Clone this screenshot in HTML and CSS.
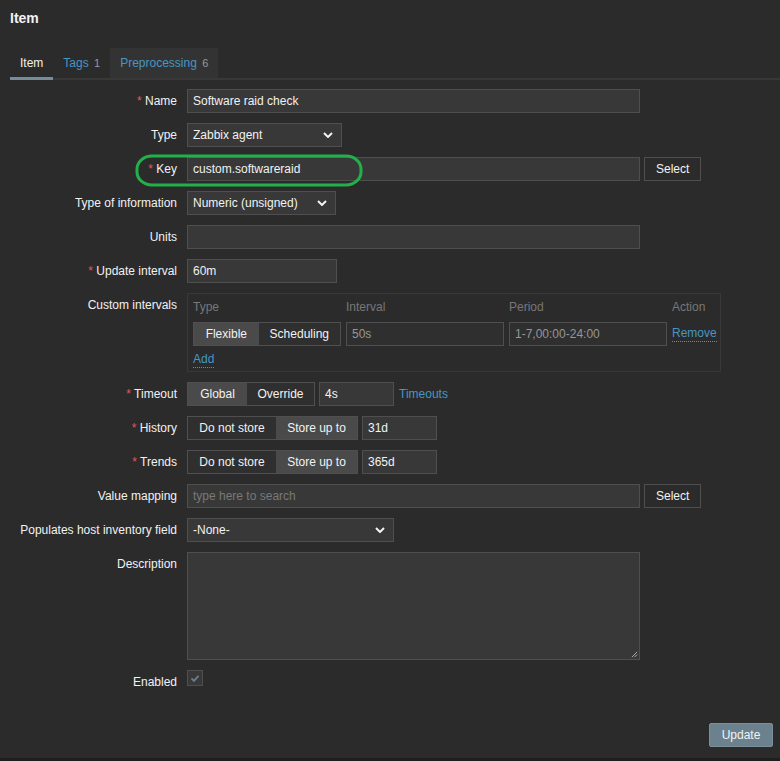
FILE: index.html
```html
<!DOCTYPE html>
<html>
<head>
<meta charset="utf-8">
<link rel="stylesheet" href="styles.css">
</head>
<body>
<div class="page">
  <div class="title">Item</div>
  <div class="tabs">
    <div class="tab active">Item</div>
    <div class="tab link">Tags <span class="cnt">1</span></div>
    <div class="tab link shaded">Preprocessing <span class="cnt">6</span></div>
  </div>

  <div class="form">
    <div class="lbl"><span class="req">*</span> Name</div>
    <div class="ctl"><div class="inp w453">Software raid check</div></div>

    <div class="lbl">Type</div>
    <div class="ctl"><div class="inp sel w155">Zabbix agent<svg class="chev" viewBox="0 0 10 6"><path d="M1 1l4 4 4-4" /></svg></div></div>

    <div class="lbl keylbl"><span class="req">*</span> Key
      <svg class="ring" viewBox="0 0 228 34"><rect x="2" y="2" width="224" height="29" rx="15" ry="13"/></svg>
    </div>
    <div class="ctl"><div class="inp w453">custom.softwareraid</div><div class="btn">Select</div></div>

    <div class="lbl">Type of information</div>
    <div class="ctl"><div class="inp sel w149">Numeric (unsigned)<svg class="chev" viewBox="0 0 10 6"><path d="M1 1l4 4 4-4" /></svg></div></div>

    <div class="lbl">Units</div>
    <div class="ctl"><div class="inp w453"></div></div>

    <div class="lbl"><span class="req">*</span> Update interval</div>
    <div class="ctl"><div class="inp w150">60m</div></div>

    <div class="lbl">Custom intervals</div>
    <div class="ctl">
      <div class="ci">
        <div class="ci-grid">
          <div class="cih">Type</div>
          <div class="cih">Interval</div>
          <div class="cih">Period</div>
          <div class="cih">Action</div>
          <div class="seg">
            <div class="sb on">Flexible</div>
            <div class="sb">Scheduling</div>
          </div>
          <div class="inp dis">50s</div>
          <div class="inp dis">1-7,00:00-24:00</div>
          <div class="dlink">Remove</div>
        </div>
        <div class="dlink add">Add</div>
      </div>
    </div>

    <div class="lbl"><span class="req">*</span> Timeout</div>
    <div class="ctl">
      <div class="seg">
        <div class="sb on gl">Global</div>
        <div class="sb ov">Override</div>
      </div>
      <div class="inp w75">4s</div>
      <div class="plink">Timeouts</div>
    </div>

    <div class="lbl"><span class="req">*</span> History</div>
    <div class="ctl">
      <div class="seg">
        <div class="sb dn">Do not store</div>
        <div class="sb on su">Store up to</div>
      </div>
      <div class="inp w75">31d</div>
    </div>

    <div class="lbl"><span class="req">*</span> Trends</div>
    <div class="ctl">
      <div class="seg">
        <div class="sb dn">Do not store</div>
        <div class="sb on su">Store up to</div>
      </div>
      <div class="inp w75">365d</div>
    </div>

    <div class="lbl">Value mapping</div>
    <div class="ctl"><div class="inp w453 ph">type here to search</div><div class="btn">Select</div></div>

    <div class="lbl">Populates host inventory field</div>
    <div class="ctl"><div class="inp sel w206">-None-<svg class="chev" viewBox="0 0 10 6"><path d="M1 1l4 4 4-4" /></svg></div></div>

    <div class="lbl">Description</div>
    <div class="ctl"><div class="inp ta w453"><svg class="grip" viewBox="0 0 8 8"><path d="M1 7L7 1M4 7L7 4" /></svg></div></div>

    <div class="lbl">Enabled</div>
    <div class="ctl"><div class="chk"><svg viewBox="0 0 16 16"><path d="M4 8.5l2.8 2.8L12 5.5" /></svg></div></div>
  </div>

  <div class="footer">
    <div class="upd">Update</div>
  </div>
</div>
<div class="bottom"></div>
</body>
</html>
```

FILE: styles.css
```css
html, body {
  margin: 0;
  padding: 0;
  background: #2b2b2b;
}
body {
  font-family: "Liberation Sans", Arial, sans-serif;
  font-size: 12px;
  color: #f2f2f2;
  width: 780px;
  height: 761px;
  overflow: hidden;
}
.page {
  height: 758px;
  display: flex;
  flex-direction: column;
}
.title {
  font-weight: bold;
  font-size: 14px;
  padding: 10px 0 0 10px;
  height: 48px;
  box-sizing: border-box;
}
.tabs {
  display: flex;
  margin: 0 0 0 10px;
  border-bottom: 2px solid #383838;
  height: 30px;
  box-sizing: content-box;
}
.tab {
  padding: 0 10px;
  line-height: 30px;
  height: 30px;
  box-sizing: border-box;
  font-size: 12px;
}
.tab.active {
  color: #f2f2f2;
  border-bottom: 3px solid #768d99;
  margin-bottom: -2px;
  height: 32px;
}
.tab.link { color: #4796c4; }
.tab .cnt { color: #999; font-size: 11px; margin-left: 2px; }
.tab.shaded { background: #333333; margin-left: 0; }

.form {
  display: grid;
  grid-template-columns: 177px 1fr;
  column-gap: 10px;
  row-gap: 10px;
  margin-top: 9px;
}
.lbl {
  text-align: right;
  line-height: 24px;
  white-space: nowrap;
  position: relative;
}
.req { color: #e45959; }
.ctl {
  display: flex;
  align-items: flex-start;
  gap: 4px;
}
.inp {
  height: 24px;
  box-sizing: border-box;
  background: #383838;
  border: 1px solid #4f4f4f;
  line-height: 22px;
  padding: 0 5px;
  color: #f2f2f2;
  white-space: nowrap;
  position: relative;
}
.w453 { width: 453px; }
.w155 { width: 155px; }
.w149 { width: 149px; }
.w150 { width: 150px; }
.w206 { width: 207px; }
.w75 { width: 75px; }
.sel { display: flex; justify-content: space-between; align-items: center; padding-right: 8px; }
.chev { width: 10px; height: 6px; }
.chev path { fill: none; stroke: #f2f2f2; stroke-width: 2; }
.ph { color: #797979; }
.btn {
  height: 24px;
  box-sizing: border-box;
  border: 1px solid #4f4f4f;
  background: #2b2b2b;
  line-height: 22px;
  padding: 0 11px;
  width: 57px;
  text-align: center;
}
.ring {
  position: absolute;
  left: 135px;
  top: -3px;
  width: 228px;
  height: 34px;
  z-index: 2;
  pointer-events: none;
}
.ring rect { fill: none; stroke: #21b14a; stroke-width: 3; }

.ci {
  width: 534px;
  box-sizing: border-box;
  border: 1px solid #383838;
  padding: 4px 5px 6px 5px;
  height: 79px;
}
.ci-grid {
  display: grid;
  grid-template-columns: 148px 158px 158px auto;
  column-gap: 5px;
  row-gap: 6px;
}
.cih { color: #777; line-height: 18px; }
.seg { display: flex; height: 24px; box-sizing: border-box; border: 1px solid #4f4f4f; }
.sb {
  line-height: 22px;
  padding: 0 11px;
  background: #2f2f2f;
  white-space: nowrap;
}
.sb.on { background: #4a4a4a; }
.ci .seg .sb:first-child { width: 65px; box-sizing: border-box; text-align: center; }
.ci .seg .sb:last-child { flex: 1; text-align: center; }
.ci .seg { width: 148px; }
.dis { color: #969696; border-color: #4f4f4f; background: #2f2f2f; }
.dlink {
  color: #4796c4;
  display: inline-block;
  border-bottom: 1px dotted #4796c4;
  align-self: start;
  margin-top: 2px;
  height: 17px;
  line-height: 18px;
}
.dlink.add { margin-top: 4px; }
.gl { width: 59px; box-sizing: border-box; text-align: center; padding: 0; }
.ov { width: 67px; box-sizing: border-box; text-align: center; padding: 0; }
.dn { width: 88px; box-sizing: border-box; text-align: center; padding: 0; }
.su { width: 81px; box-sizing: border-box; text-align: center; padding: 0; }
.plink { color: #4796c4; line-height: 24px; margin-left: 1px; }
.ta { height: 108px; }
.grip { position: absolute; right: 1px; bottom: 1px; width: 7px; height: 7px; }
.grip path { stroke: #bbb; stroke-width: 1; fill: none; }
.chk {
  width: 16px;
  height: 16px;
  box-sizing: border-box;
  background: #383838;
  border: 1px solid #4f4f4f;
}
.chk svg { width: 14px; height: 14px; display: block; }
.chk path { fill: none; stroke: #6d7f88; stroke-width: 2; }
.footer {
  margin-top: auto;
  display: flex;
  justify-content: flex-end;
  padding: 0 7px 11px 0;
}
.upd {
  background: #6b828e;
  color: #f2f2f2;
  border: 1px solid #7a8f99;
  height: 24px;
  box-sizing: border-box;
  line-height: 22px;
  width: 64px;
  text-align: center;
  border-radius: 2px;
}
.bottom {
  height: 3px;
  background: #1e1e1e;
}
```
